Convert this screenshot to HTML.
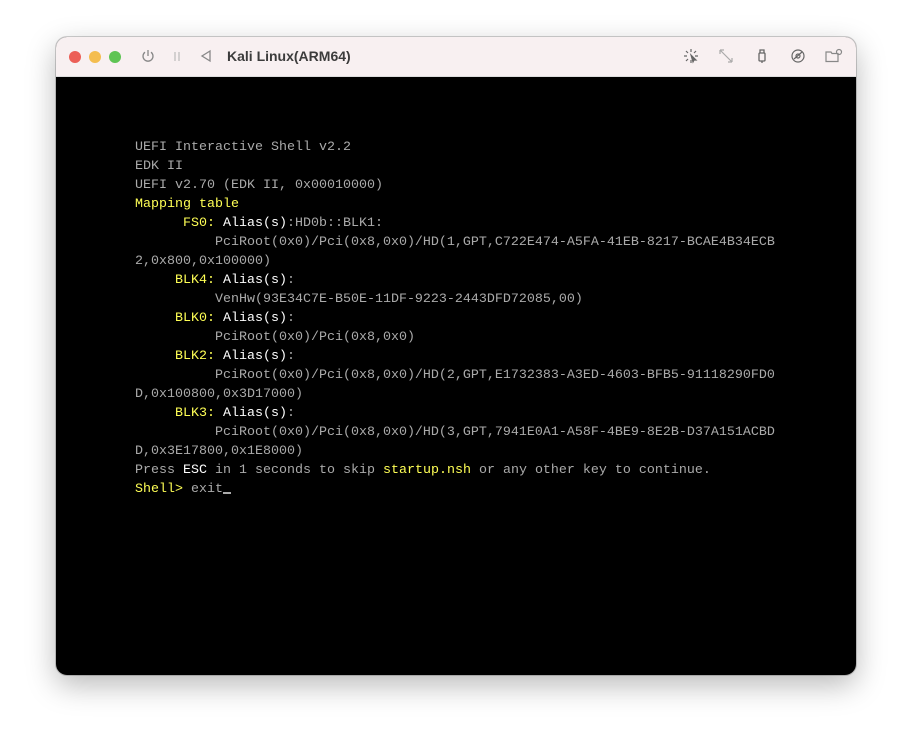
<!DOCTYPE html>
<html><head><style>
body{margin:0;width:912px;height:750px;background:#fff;position:relative;overflow:hidden;font-family:"Liberation Sans",sans-serif}
.win{position:absolute;left:56px;top:37px;width:800px;height:638px;border-radius:11px;overflow:hidden;background:#000;box-shadow:0 10px 30px rgba(0,0,0,.28),0 0 0 1px rgba(0,0,0,.18)}
.tb{position:absolute;left:0;top:0;width:800px;height:39px;background:#f8f0f1;border-bottom:1px solid #ddd}
.dot{position:absolute;top:14px;width:12px;height:12px;border-radius:50%}
.title{position:absolute;left:171px;top:11px;font-size:14px;font-weight:bold;color:#3c3c3c}
.ic{position:absolute;top:11px}
pre{position:absolute;left:79px;top:101px;margin:0;font-family:"Liberation Mono",monospace;font-size:13.33px;line-height:19px;color:#aaa}
.y{color:#ff5}.w{color:#fff}
.cur{display:inline-block;width:8px;height:2px;background:#aaa;vertical-align:-2px}
</style></head><body>
<div class="win">
<div class="tb">
<div class="dot" style="left:13px;background:#ec5f57"></div>
<div class="dot" style="left:33px;background:#f4bd4f"></div>
<div class="dot" style="left:53px;background:#5fc454"></div>
<svg class="ic" style="left:84px" width="16" height="16" viewBox="0 0 16 16" fill="none" stroke="#888" stroke-width="1.3"><path d="M8 2v6"/><path d="M5 4.2a5 5 0 1 0 6 0"/></svg>
<svg class="ic" style="left:116px" width="10" height="16" viewBox="0 0 10 16" stroke="#bbb" stroke-width="1.2"><path d="M3 4v9M7 4v9"/></svg>
<svg class="ic" style="left:143px" width="14" height="16" viewBox="0 0 14 16" fill="none" stroke="#888" stroke-width="1.3"><path d="M11 3L3 8l8 5z"/></svg>
<div class="title">Kali Linux(ARM64)</div>
<svg class="ic" style="left:627px" width="16" height="16" viewBox="0 0 16 16" fill="none" stroke="#666" stroke-width="1.2"><path d="M8 1v3M8 12v3M1 8h3M12 8h3M3 3l2 2M13 3l-2 2M3 13l2-2"/><path d="M8 7l5 5-2 0-1 2z" fill="#666"/></svg>
<svg class="ic" style="left:662px" width="16" height="16" viewBox="0 0 16 16" fill="none" stroke="#aaa" stroke-width="1.2"><path d="M2 2l12 12M2 2v4M2 2h4M14 14h-4M14 14v-4"/></svg>
<svg class="ic" style="left:698px" width="16" height="16" viewBox="0 0 16 16" fill="none" stroke="#666" stroke-width="1.3"><rect x="5" y="5" width="6" height="8" rx="1"/><path d="M6 5V2h4v3M8 13v2"/></svg>
<svg class="ic" style="left:734px" width="16" height="16" viewBox="0 0 16 16" fill="none" stroke="#666" stroke-width="1.2"><circle cx="8" cy="8" r="6"/><circle cx="8" cy="8" r="2"/><path d="M4 11l8-7"/></svg>
<svg class="ic" style="left:768px" width="20" height="16" viewBox="0 0 20 16" fill="none" stroke="#888" stroke-width="1.2"><path d="M2 4h5l1 1.5h6v8H2z"/><circle cx="15" cy="4" r="2.5"/></svg>
</div>
<pre>UEFI Interactive Shell v2.2
EDK II
UEFI v2.70 (EDK II, 0x00010000)
<span class="y">Mapping table</span>
      <span class="y">FS0:</span> <span class="w">Alias(s)</span>:HD0b::BLK1:
          PciRoot(0x0)/Pci(0x8,0x0)/HD(1,GPT,C722E474-A5FA-41EB-8217-BCAE4B34ECB
2,0x800,0x100000)
     <span class="y">BLK4:</span> <span class="w">Alias(s)</span>:
          VenHw(93E34C7E-B50E-11DF-9223-2443DFD72085,00)
     <span class="y">BLK0:</span> <span class="w">Alias(s)</span>:
          PciRoot(0x0)/Pci(0x8,0x0)
     <span class="y">BLK2:</span> <span class="w">Alias(s)</span>:
          PciRoot(0x0)/Pci(0x8,0x0)/HD(2,GPT,E1732383-A3ED-4603-BFB5-91118290FD0
D,0x100800,0x3D17000)
     <span class="y">BLK3:</span> <span class="w">Alias(s)</span>:
          PciRoot(0x0)/Pci(0x8,0x0)/HD(3,GPT,7941E0A1-A58F-4BE9-8E2B-D37A151ACBD
D,0x3E17800,0x1E8000)
Press <span class="w">ESC</span> in 1 seconds to skip <span class="y">startup.nsh</span> or any other key to continue.
<span class="y">Shell&gt;</span> exit<span class="cur"></span></pre>
</div>
</body></html>
